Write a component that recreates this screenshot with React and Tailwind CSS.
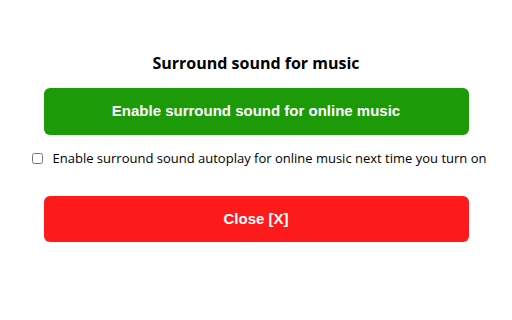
export default function App() {
  return (
    <div className="w-[512px] h-[320px] bg-white flex flex-col items-center pt-[53px]">
      <h1 className="text-[16px] font-bold text-black leading-[21px] font-['Open_Sans',sans-serif]">
        Surround sound for music
      </h1>
      <button className="mt-[14px] w-[425px] h-[47px] rounded-[6px] bg-[#1c9a08] text-white font-bold text-[15px] font-['Liberation_Sans',Arial,sans-serif]">
        Enable surround sound for online music
      </button>
      <label className="mt-[14px] pl-[6px] flex items-center gap-[10px] text-[13px] text-black leading-[18px] font-['Open_Sans',sans-serif]">
        <input type="checkbox" className="w-[11px] h-[11px] m-0" />
        <span>Enable surround sound autoplay for online music next time you turn on</span>
      </label>
      <button className="mt-[29px] w-[425px] h-[46px] rounded-[6px] bg-[#fc1a1a] text-white font-bold text-[15px] font-['Liberation_Sans',Arial,sans-serif]">
        Close [X]
      </button>
    </div>
  );
}
